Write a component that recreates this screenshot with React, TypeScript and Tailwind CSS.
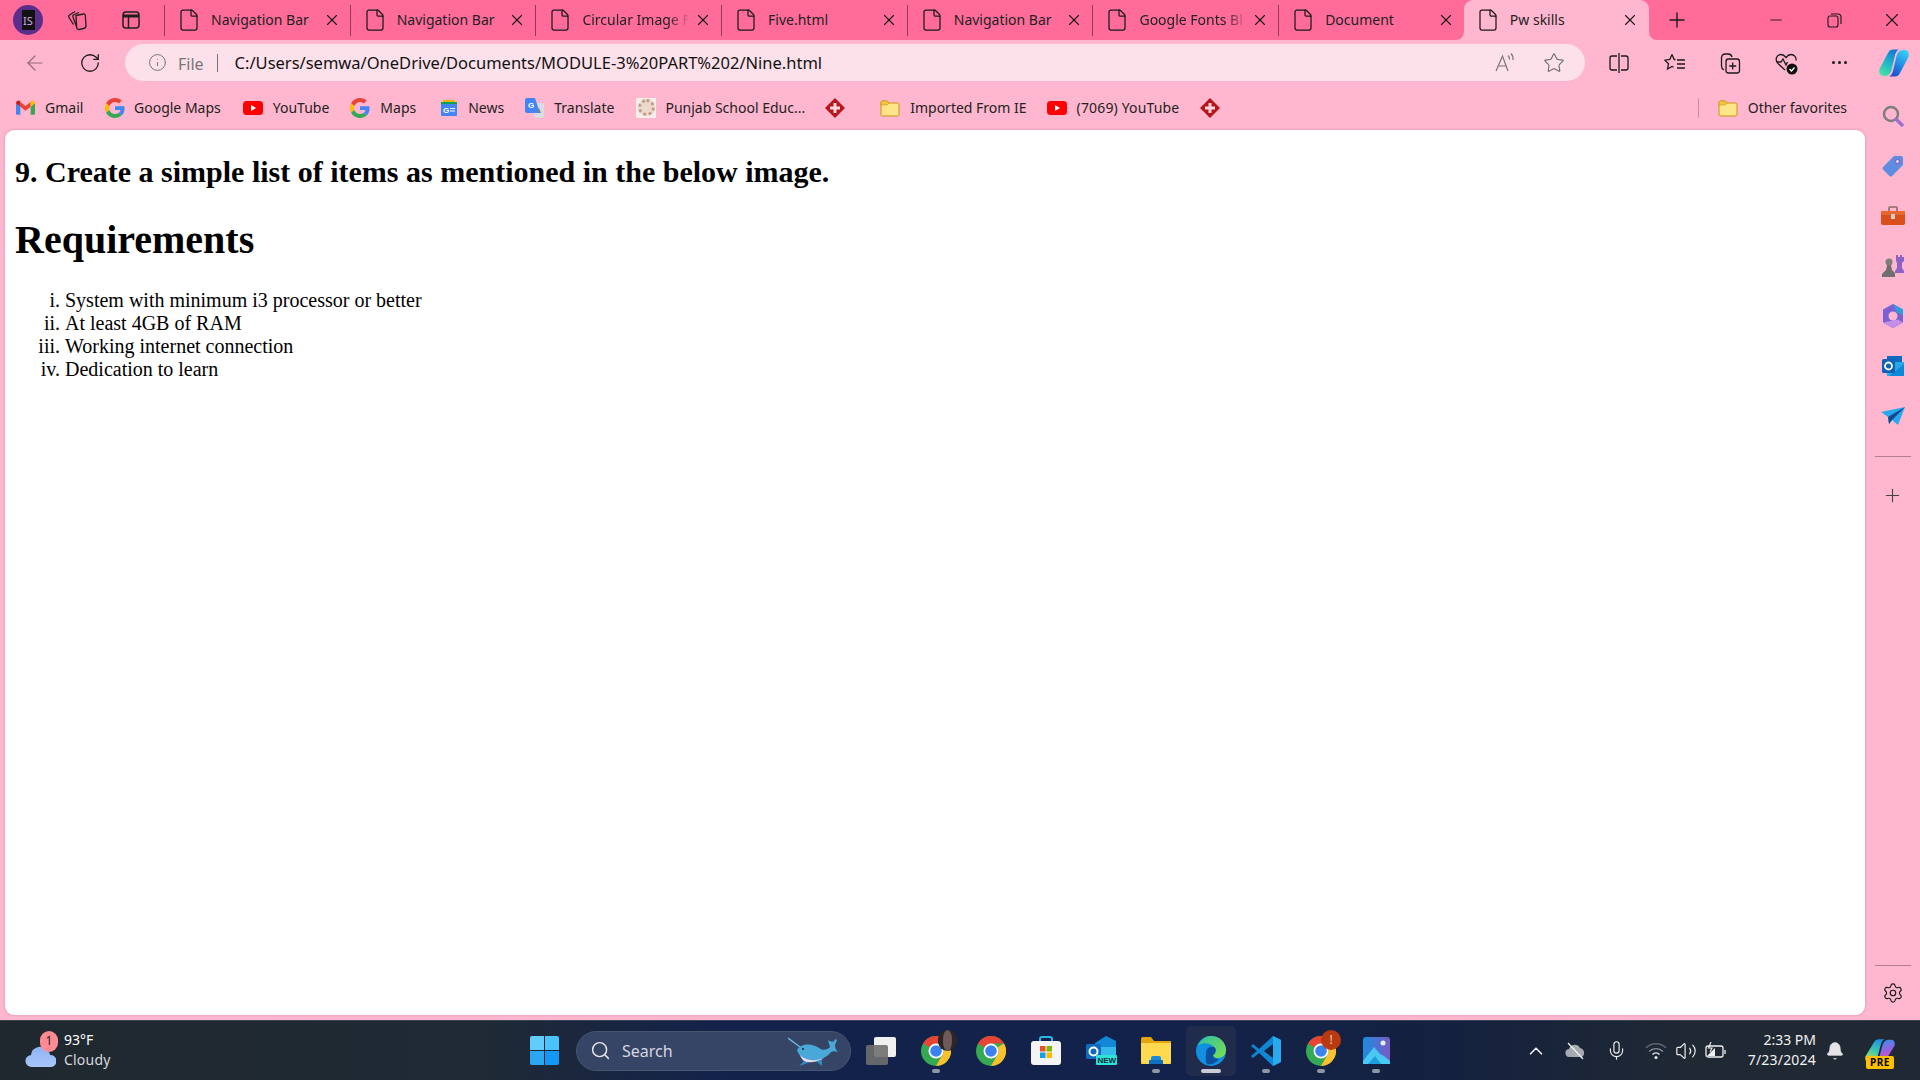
import React from "react";
import { ArrowLeft, RotateCw, Info, Star, X, Plus, Minus, Search, Settings, Mic, Volume2, ChevronUp, Bell, File } from "lucide-react";

const ui = "font-['Noto_Sans','Open_Sans',sans-serif]";

const GoogleG = ({ s = 20 }: { s?: number }) => (
  <svg width={s} height={s} viewBox="0 0 48 48">
    <path fill="#EA4335" d="M24 9.5c3.5 0 6.700 1.200 9.200 3.600l6.900-6.900C35.900 2.400 30.500 0 24 0 14.600 0 6.500 5.400 2.600 13.200l8 6.200C12.500 13.600 17.800 9.500 24 9.500z" />
    <path fill="#4285F4" d="M47 24.500c0-1.600-.2-3.100-.4-4.500H24v9h13c-.6 3-2.200 5.500-4.700 7.200l7.700 6C44.400 38.100 47 31.900 47 24.500z" />
    <path fill="#FBBC05" d="M10.600 28.600A14.500 14.500 0 0 1 10.600 19.400l-8-6.200a24 24 0 0 0 0 21.600l8-6.200z" />
    <path fill="#34A853" d="M24 48c6.500 0 11.900-2.100 15.900-5.800l-7.700-6c-2.100 1.400-4.900 2.300-8.200 2.300-6.200 0-11.500-4.200-13.400-9.900l-8 6.200C6.500 42.600 14.600 48 24 48z" />
  </svg>
);
const Gmail = () => (
  <svg width="19" height="15" viewBox="0 0 24 18">
    <path fill="#4285F4" d="M0 3v13.500A1.500 1.500 0 0 0 1.500 18H5.500V8z" />
    <path fill="#34A853" d="M24 3v13.500a1.500 1.500 0 0 1-1.500 1.500H18.500V8z" />
    <path fill="#EA4335" d="M5.500 8V2L12 7l6.500-5v6L12 13z" />
    <path fill="#C5221F" d="M0 3.500C0 .8 3.200-.7 5.500 1V8L0 3.500z" />
    <path fill="#FBBC04" d="M24 3.500C24 .8 20.800-.7 18.500 1V8L24 3.500z" />
  </svg>
);
const YT = () => (
  <svg width="20" height="14" viewBox="0 0 20 14"><rect width="20" height="14" rx="3.500" fill="#f00" /><path d="M8 4l5 3-5 3z" fill="#fff" /></svg>
);
const Diamond = () => (
  <svg width="20" height="20" viewBox="0 0 20 20">
    <path d="M10 0l10 10-10 10L0 10z" fill="#b8151b" />
    <path d="M8.500 5h3v3.500H15v3h-3.500V15h-3v-3.500H5v-3h3.500z" fill="#fbd5dc" />
  </svg>
);
const Folder = () => (
  <svg width="20" height="20" viewBox="0 0 20 20">
    <path d="M1 4.500A1.500 1.500 0 0 1 2.500 3H7l2 2h8.500A1.500 1.500 0 0 1 19 6.500v10a1.500 1.500 0 0 1-1.500 1.500h-15A1.500 1.500 0 0 1 1 16.500z" fill="#ffe58a" stroke="#c8950e" />
    <path d="M1 7V4.500A1.500 1.500 0 0 1 2.500 3H7l2 2-2 2z" fill="#f2c53d" stroke="#c8950e" strokeWidth=".6" />
  </svg>
);
const News = () => (
  <svg width="18" height="18" viewBox="0 0 18 18">
    <path d="M3 1h12v5H3z" fill="#f4b400" /><path d="M1 3h16v3H1z" fill="#0f9d58" />
    <rect x="1" y="5" width="16" height="12" rx="1" fill="#4285F4" />
    <text x="3" y="14" fontSize="8" fill="#fff" fontWeight="700" fontFamily="Liberation Sans">G</text>
    <path d="M10 9h5v1h-5zm0 2.500h5v1h-5z" fill="#fff" />
  </svg>
);
const Translate = () => (
  <svg width="19" height="20" viewBox="0 0 19 20">
    <path d="M7 5h10a2 2 0 0 1 2 2v11a2 2 0 0 1-2 2h-7z" fill="#d9dde3" />
    <path d="M2 0h8l5 15H2a2 2 0 0 1-2-2V2a2 2 0 0 1 2-2z" fill="#4285F4" />
    <text x="3" y="10" fontSize="8" fill="#fff" fontWeight="700" fontFamily="Liberation Sans">G</text>
    <path d="M14 10l2 5h-1l-.5-1.300h-2L12 15h-1z" fill="#7a8088" />
  </svg>
);
const Seal = () => (
  <div className="w-[20px] h-[20px] bg-[#f5efe9] flex items-center justify-center">
    <div className="w-[17px] h-[17px] rounded-full border-[3px] border-dotted border-[#c49a86] bg-[#ead9cc]" />
  </div>
);

const TabFile = () => <File size={24} strokeWidth={1.250} className="text-[#1a1a1a] shrink-0" />;

function Tab({ title, fade }: { title: string; fade?: boolean }) {
  return (
    <div className="w-[185.7px] h-[31px] flex items-center border-l border-[#8e3a58] pl-[12px] pr-[9px]">
      <TabFile />
      <span className={`ml-[10px] pb-[2px] w-[108px] overflow-hidden whitespace-nowrap text-[14px] text-[#222] ${fade ? "[mask-image:linear-gradient(to_right,black_80%,transparent)]" : ""}`}>{title}</span>
      <X size={18} strokeWidth={1.500} className="ml-auto text-[#1a1a1a]" />
    </div>
  );
}

const bookmarks: { icon: React.ReactNode; label: string; ml: number; gap: number }[] = [
  { icon: <GoogleG />, label: "Google Maps", ml: 21, gap: 9 },
  { icon: <YT />, label: "YouTube", ml: 22, gap: 10 },
  { icon: <GoogleG />, label: "Maps", ml: 21, gap: 10 },
  { icon: <News />, label: "News", ml: 24, gap: 10 },
  { icon: <Translate />, label: "Translate", ml: 21, gap: 10 },
  { icon: <Seal />, label: "Punjab School Educ...", ml: 22, gap: 9 },
];

const Copilot = ({ s = 30 }: { s?: number }) => (
  <svg width={s} height={s} viewBox="0 0 30 30">
    <defs>
      <linearGradient id="cp1" x1="0.2" y1="1" x2="0.7" y2="0"><stop offset="0" stopColor="#45e3a5" /><stop offset="0.5" stopColor="#1cb6c8" /><stop offset="1" stopColor="#0f78d8" /></linearGradient>
      <linearGradient id="cp2" x1="0.7" y1="0" x2="0.2" y2="1"><stop offset="0" stopColor="#35cdf6" /><stop offset="0.6" stopColor="#1f7fe0" /><stop offset="1" stopColor="#2148c8" /></linearGradient>
    </defs>
    <path d="M9 5C10 2.500 12 1.500 14 1.500H21C18 1.500 17 4 16 7L12.500 22C11.500 26 9 28 6 28H4C1 28-.5 25 .5 21Z" fill="url(#cp1)" />
    <path d="M21 25C20 27.500 18 28.500 16 28.500H9C12 28.500 13 26 14 23L17.500 8C18.500 4 21 2 24 2H26C29 2 30.500 5 29.500 9Z" fill="url(#cp2)" />
  </svg>
);

const Chrome = ({ s = 30 }: { s?: number }) => (
  <svg width={s} height={s} viewBox="0 0 30 30">
    <circle cx="15" cy="15" r="15" fill="#34a853" />
    <path d="M15 0a15 15 0 0 1 13 7.500H15A7.500 7.500 0 0 0 8.500 11.300L2 7.500A15 15 0 0 1 15 0z" fill="#ea4335" />
    <path d="M28 7.500A15 15 0 0 1 15 30l6.500-11.200A7.500 7.500 0 0 0 21.500 11.300z" fill="#fbc02d" />
    <circle cx="15" cy="15" r="7.500" fill="#fff" />
    <circle cx="15" cy="15" r="5.800" fill="#3b82f0" />
  </svg>
);

const Dot = ({ wide }: { wide?: boolean }) => (
  <span className={`absolute bottom-[3px] left-1/2 -translate-x-1/2 h-[4px] rounded-full ${wide ? "w-[20px] bg-[#c9ccd4]" : "w-[8px] bg-[#8f95a5]"}`} />
);

function Slot({ children, dot, active }: { children: React.ReactNode; dot?: boolean; active?: boolean }) {
  return (
    <div className="w-[55px] h-[50px] shrink-0 flex items-center justify-center">
      <div className={`relative w-[50px] h-[50px] flex items-center justify-center rounded-[5px] ${active ? "bg-[#212c4c]" : ""}`}>
        {children}
        {dot && <Dot wide={active} />}
      </div>
    </div>
  );
}

export default function App() {
  return (
    <div className={`w-[1920px] h-[1080px] overflow-hidden flex flex-col bg-[#ffb7cf] ${ui}`}>
      {/* tab strip */}
      <div className="h-[40px] shrink-0 bg-[#ff6c9a] flex items-center">
        <div className="w-[164px] shrink-0 flex items-center pl-[13px]">
          <div className="w-[30px] h-[30px] rounded-full bg-[#5b2e8c] flex items-center justify-center">
            <div className="w-[13px] h-[20px] bg-[#111] flex items-center justify-center text-[11px] leading-none text-[#d9a8ec]">IS</div>
          </div>
          <svg className="ml-[23px]" width="22" height="22" viewBox="0 0 22 22" fill="none" stroke="#1f1f1f" strokeWidth="1.300">
            <path d="M10 6.500l7.500-1.500a1.500 1.500 0 0 1 1.800 1.300l.7 10a3 3 0 0 1-2.500 3.200L13 20.500a2 2 0 0 1-2.300-1.800z" />
            <path d="M10.500 17.500 7 8a2 2 0 0 1 1.200-2.500L13 3.500" />
            <path d="M7.500 15.500 3 8.500a2 2 0 0 1 .8-2.700L9 2.500" />
          </svg>
          <svg className="ml-[33px]" width="20" height="20" viewBox="0 0 20 20" fill="none" stroke="#1f1f1f" strokeWidth="1.500">
            <rect x="2" y="2" width="16" height="16" rx="3" />
            <path d="M2 6h16" strokeWidth="3" /><path d="M7.500 6v12" />
          </svg>
        </div>
        <Tab title="Navigation Bar" />
        <Tab title="Navigation Bar" />
        <Tab title="Circular Image F" fade />
        <Tab title="Five.html" />
        <Tab title="Navigation Bar" />
        <Tab title="Google Fonts Bl" fade />
        <Tab title="Document" />
        <div className="relative w-[185px] h-[40px] bg-[#ffb7cf] rounded-t-[9px] flex items-center pl-[12px] pr-[10px]">
          <svg className="absolute -left-[8px] bottom-0" width="8" height="8" viewBox="0 0 8 8"><path d="M8 0v8H0a8 8 0 0 0 8-8z" fill="#ffb7cf" /></svg>
          <svg className="absolute -right-[8px] bottom-0" width="8" height="8" viewBox="0 0 8 8"><path d="M0 0v8h8a8 8 0 0 1-8-8z" fill="#ffb7cf" /></svg>
          <TabFile />
          <span className="ml-[10px] pb-[2px] text-[14px] text-[#222]">Pw skills</span>
          <X size={18} strokeWidth={1.500} className="ml-auto text-[#1a1a1a]" />
        </div>
        <Plus size={24} strokeWidth={1.400} className="ml-[16px] text-[#1a1a1a]" />
        <Minus size={18} strokeWidth={1.200} className="ml-[78px] text-[#1a1a1a]" />
        <svg className="ml-[41px]" width="16" height="16" viewBox="0 0 16 16" fill="none" stroke="#1a1a1a" strokeWidth="1.100">
          <rect x="2" y="4" width="10" height="11" rx="2" /><path d="M5 2h7a3 3 0 0 1 3 3v7" />
        </svg>
        <X size={22} strokeWidth={1.200} className="ml-[39px] text-[#1a1a1a]" />
      </div>

      {/* toolbar */}
      <div className="h-[45px] shrink-0 flex items-center">
        <ArrowLeft size={24} strokeWidth={1.200} className="ml-[23px] text-[#96687a]" />
        <RotateCw size={22} strokeWidth={1.400} className="ml-[32px] text-[#1a1a1a]" />
        <div className="ml-[24px] w-[1460px] h-[37px] rounded-full bg-[#fde1ea] flex items-center pl-[23px] pr-[20px]">
          <Info size={19} strokeWidth={1.200} className="text-[#6f6f6f]" />
          <span className="ml-[11px] mt-[2px] text-[16px] text-[#777]">File</span>
          <span className="ml-[13px] w-[1px] h-[18px] bg-[#777]" />
          <span className="ml-[17px] mt-[2px] text-[16.500px] text-[#111] whitespace-nowrap">C:/Users/semwa/OneDrive/Documents/MODULE-3%20PART%202/Nine.html</span>
          <svg className="ml-auto" width="22" height="22" viewBox="0 0 22 22" fill="none" stroke="#7c7378" strokeWidth="1.200">
            <path d="M2 19 8.500 4 14 19M4.500 14h7.500" /><path d="M14 3.500a5 5 0 0 1 1.500 4M17 1.500a8 8 0 0 1 2 6.500" />
          </svg>
          <Star size={22} strokeWidth={1.200} className="ml-[27px] text-[#6f6a6d]" />
        </div>
        <svg className="ml-[24px]" width="20" height="20" viewBox="0 0 20 20" fill="none" stroke="#1a1a1a" strokeWidth="1.300">
          <path d="M10 0v20M8 3H3a2 2 0 0 0-2 2v10a2 2 0 0 0 2 2h5M12 3h5a2 2 0 0 1 2 2v10a2 2 0 0 1-2 2h-5" />
        </svg>
        <svg className="ml-[35px]" width="22" height="22" viewBox="0 0 22 22" fill="none" stroke="#1a1a1a" strokeWidth="1.300">
          <path d="M8 2.500 5.800 7.500l-5 .7 3.700 3.500-1 5.300 4.500-2.600 1.500 .9" /><path d="M8 2.500l2.200 5h1.300" /><path d="M13 8h8M13 12h8M13 16h8" />
        </svg>
        <svg className="ml-[33px]" width="22" height="22" viewBox="0 0 22 22" fill="none" stroke="#1a1a1a" strokeWidth="1.300">
          <path d="M5 18c-2-1-2.500-2-2.500-4V6c0-2 1-4 4-4h3c2 0 3 1 3.500 3" />
          <rect x="7" y="7" width="13.500" height="14" rx="2.500" /><path d="M13.700 10.500v7M10.200 14h7" />
        </svg>
        <svg className="ml-[33px]" width="24" height="24" viewBox="0 0 24 24" fill="none" stroke="#1a1a1a" strokeWidth="1.300">
          <path d="M11 19 4 12.500C.5 9 2.500 3.500 7 3.500c2 0 3.500 1 5 3 1.500-2 3-3 5-3 3.500 0 5.500 3 5 6" />
          <path d="M3 11h4l2-3 3 6 1.500-3" />
          <circle cx="18" cy="18" r="5.500" fill="#111" stroke="none" /><path d="M15.500 18l2 2 3-3.500" stroke="#fff" />
        </svg>
        <span className="ml-[34px] flex gap-[3px]">
          <span className="w-[3px] h-[3px] rounded-full bg-[#1a1a1a]" /><span className="w-[3px] h-[3px] rounded-full bg-[#1a1a1a]" /><span className="w-[3px] h-[3px] rounded-full bg-[#1a1a1a]" />
        </span>
        <div className="ml-[32px]"><Copilot /></div>
      </div>

      <div className="flex-1 min-h-0 flex">
        {/* bookmarks + page */}
        <div className="w-[1865px] shrink-0 flex flex-col pb-[5px]">
          <div className="h-[45px] shrink-0 flex items-center text-[14px] text-[#222] whitespace-nowrap">
            <div className="ml-[16px]"><Gmail /></div>
            <span className="ml-[10px] w-[39px]">Gmail</span>
            {bookmarks.map((b, i) => (
              <div key={i} className="flex items-center" style={{ marginLeft: b.ml, gap: b.gap }}>
                {b.icon}
                <span>{b.label}</span>
              </div>
            ))}
            <div className="ml-[20px]"><Diamond /></div>
            <div className="ml-[35px]"><Folder /></div>
            <span className="ml-[10px]">Imported From IE</span>
            <div className="ml-[20px]"><YT /></div>
            <span className="ml-[10px] tracking-[0.15px]">(7069) YouTube</span>
            <div className="ml-[21px]"><Diamond /></div>
            <span className="ml-auto w-[1px] h-[20px] bg-[#c9909f]" />
            <div className="ml-[19px]"><Folder /></div>
            <span className="ml-[10px] mr-[18px]">Other favorites</span>
          </div>
          <div className="flex-1 min-h-0 ml-[5px] bg-white rounded-[9px] px-[10px] pt-[25px] text-black font-['Liberation_Serif',serif] shadow-[0_0_3px_rgba(150,80,110,0.4)]">
            <h2 className="text-[30px] leading-[34.5px] font-bold">9. Create a simple list of items as mentioned in the below image.</h2>
            <h1 className="mt-[27px] text-[40px] leading-[46px] font-bold">Requirements</h1>
            <ol className="mt-[26px] pl-[50px] list-[lower-roman] text-[20px] leading-[23px]">
              <li>System with minimum i3 processor or better</li>
              <li>At least 4GB of RAM</li>
              <li>Working internet connection</li>
              <li>Dedication to learn</li>
            </ol>
          </div>
        </div>

        {/* sidebar */}
        <div className="flex-1 flex flex-col items-center pt-[6px] pb-[16px]">
          {[
            <svg width="24" height="24" viewBox="0 0 24 24" fill="none"><circle cx="10" cy="10" r="7" stroke="#7d7d7d" strokeWidth="2.500" /><path d="M15.500 15.500 21 21" stroke="#9a6fd0" strokeWidth="3.500" strokeLinecap="round" /></svg>,
            <svg width="22" height="22" viewBox="0 0 22 22"><path d="M12 1h7a2 2 0 0 1 2 2v7L10 21a2 2 0 0 1-2.500 0L1 14.500A2 2 0 0 1 1 12z" fill="#5f8be0" /><circle cx="15.500" cy="6.500" r="2" fill="#e2d9f5" stroke="#7d55b5" /></svg>,
            <svg width="24" height="22" viewBox="0 0 24 22"><path d="M8 6V3a1 1 0 0 1 1-1h6a1 1 0 0 1 1 1v3" fill="none" stroke="#8c6a60" strokeWidth="1.600" /><rect y="6" width="24" height="14" rx="2" fill="#d94f1c" /><rect y="6" width="24" height="4" fill="#e8672e" /><rect x="10" y="9" width="4" height="5" fill="#cfcfcf" /></svg>,
            <svg width="24" height="24" viewBox="0 0 24 24"><path d="M15 1h2v2h2V1h2v2h2V1v6l-2 2v5l2 3v2H14v-2l2-3V9l-1-2z" fill="#8d64c6" /><circle cx="8" cy="8" r="3.500" fill="#7d7d7d" /><path d="M6 11h4l1 5 3 3v4H1v-3l4-4z" fill="#6f6f6f" /></svg>,
            <svg width="22" height="24" viewBox="0 0 22 24"><path d="M11 0l10 5.500v13L11 24 1 18.500v-13z" fill="#7b5fd3" /><path d="M11 0l10 5.500v6l-6-3z" fill="#2d9fe0" /><path d="M1 18.500 11 24l10-5.500-5-3z" fill="#c38ee6" /><circle cx="11" cy="12" r="4.500" fill="#ffb7cf" /></svg>,
            <svg width="22" height="22" viewBox="0 0 22 22"><rect x="5" y="1" width="15" height="8" fill="#0f6cbd" /><rect x="5" y="7" width="17" height="14" fill="#28a8ea" /><path d="M22 9v12H7z" fill="#0a8ad8" /><rect y="4" width="13" height="14" rx="1.500" fill="#0f62b5" /><circle cx="6.500" cy="11" r="3.500" fill="none" stroke="#fff" strokeWidth="1.800" /></svg>,
            <svg width="24" height="18" viewBox="0 0 24 18"><path d="M0 5 24 0 17 18l-6-5-3 4-1-7z" fill="#2aa8ee" /><path d="M7 10 24 0 11 13 8 17z" fill="#114a8c" /></svg>,
          ].map((icon, i) => (
            <div key={i} className="h-[50px] shrink-0 flex items-center justify-center">{icon}</div>
          ))}
          <div className="mt-[15px] w-[36px] h-[1px] bg-[#b0808f]" />
          <Plus size={21} strokeWidth={1.300} className="mt-[28px] text-[#444]" />
          <div className="mt-auto w-[36px] h-[1px] bg-[#b0808f]" />
          <Settings size={22} strokeWidth={1.300} className="mt-[16px] text-[#1a1a1a]" />
        </div>
      </div>

      {/* taskbar */}
      <div className="h-[60px] shrink-0 border-t border-[#3b4150] bg-[linear-gradient(to_right,#20282f_0%,#1f2a35_25%,#13224b_38%,#13224a_62%,#14213f_75%,#1f2833_88%,#1f2833_100%)] flex items-center text-white">
        <div className="w-[530px] shrink-0 flex items-center pl-[25px]">
          <div className="relative w-[39px] h-[40px] flex items-end">
            <svg width="31" height="24" viewBox="0 0 31 24" className="mb-[3px]">
              <defs><linearGradient id="cl" x1="0" y1="0" x2="0" y2="1"><stop offset="0" stopColor="#8fb4f5" /><stop offset="1" stopColor="#a9c6fb" /></linearGradient></defs>
              <path d="M7 23a6 6 0 0 1-1-12 8.500 8.500 0 0 1 15-5 6 6 0 0 1 4 5 6 6 0 0 1 1 12z" fill="url(#cl)" />
            </svg>
            <span className="absolute left-[15px] top-[0px] w-[18px] h-[21px] rounded-full bg-[#ff8a94] text-[#1a1a1a] text-[12px] flex items-center justify-center">1</span>
          </div>
          <div className="text-[14px] leading-[20px] pb-[2px]">
            <div>93°F</div>
            <div className="text-[#d6d8dc] tracking-[0.2px]">Cloudy</div>
          </div>
        </div>
        <div className="grid grid-cols-2 gap-[1.500px] w-[29px] h-[29px] shrink-0">
          <span className="bg-[#60cdfb] rounded-tl-[2px]" /><span className="bg-[#49c3fb] rounded-tr-[2px]" />
          <span className="bg-[#2ba7f0] rounded-bl-[2px]" /><span className="bg-[#1398f5] rounded-br-[2px]" />
        </div>
        <div className="ml-[17px] w-[275px] h-[40px] shrink-0 rounded-full bg-[#364465] border border-[#47536f] flex items-center pl-[13px] pr-[10px]">
          <Search size={21} strokeWidth={1.700} className="text-[#e8e8e8]" />
          <span className="ml-[11px] text-[16px] text-[#d4d8e0]">Search</span>
          <svg className="ml-auto" width="52" height="30" viewBox="0 0 52 30">
            <path d="M0 2 12 11" stroke="#6ab6e3" strokeWidth="1.500" />
            <path d="M9 14C13 7 24 7 31 12c4 3 8 2 11-1l-2-7c3 2 6 3 7-1l2 1-2 5c0 3 1 5 3 7-3-1-5-1-7 0-4 5-11 9-19 8C15 24 11 20 9 14z" fill="#4aa8d8" />
            <path d="M12 19c5 5 14 7 24 3-5 4-13 5-18 4-3-1-5-4-6-7z" fill="#e0dcf2" />
            <path d="M16 25 11 30l9-3zM28 25l6 5 0-6z" fill="#2a8fc0" />
            <circle cx="15" cy="13" r="1" fill="#123" />
          </svg>
        </div>
        <div className="ml-[2.500px] flex items-center">
          <Slot>
            <div className="relative w-[30px] h-[28px]">
              <span className="absolute right-0 top-0 w-[22px] h-[20px] rounded-[2px] bg-[#f0f0f0]" />
              <span className="absolute left-0 bottom-0 w-[22px] h-[20px] rounded-[2px] bg-[#6f6f6f]/90" />
            </div>
          </Slot>
          <Slot dot>
            <div className="relative"><Chrome />
              <span className="absolute -right-[6px] -top-[6px] w-[19px] h-[21px] rounded-full bg-[#6e5a58] border-x-[5px] border-[#2c2526]" />
            </div>
          </Slot>
          <Slot><Chrome /></Slot>
          <Slot>
            <svg width="30" height="30" viewBox="0 0 30 30">
              <path d="M9 6V3a2 2 0 0 1 2-2h8a2 2 0 0 1 2 2v3" fill="none" stroke="#29b6e8" strokeWidth="2" />
              <rect y="5" width="30" height="24" rx="3" fill="#f4f4f4" />
              <rect x="9" y="10" width="5.500" height="5.500" fill="#e8522a" /><rect x="15.500" y="10" width="5.500" height="5.500" fill="#7fb900" />
              <rect x="9" y="16.500" width="5.500" height="5.500" fill="#0ea2e8" /><rect x="15.500" y="16.500" width="5.500" height="5.500" fill="#ffb900" />
            </svg>
          </Slot>
          <Slot>
            <svg width="31" height="29" viewBox="0 0 31 29">
              <path d="M9 7 20 0l10 5v16H9z" fill="#1287d8" /><path d="M15 11h15v10H15z" fill="#35b8ea" />
              <rect y="8" width="15" height="15" rx="1.500" fill="#0f6cbd" />
              <circle cx="7.500" cy="15.500" r="4" fill="none" stroke="#fff" strokeWidth="2" />
              <rect x="10" y="19" width="21" height="10" rx="1" fill="#2ee2d8" />
              <text x="11.500" y="27" fontSize="8" fontWeight="700" fill="#0b2a3a" fontFamily="Liberation Sans">NEW</text>
            </svg>
          </Slot>
          <Slot dot>
            <svg width="30" height="27" viewBox="0 0 30 27">
              <path d="M0 2a2 2 0 0 1 2-2h8l3 4h17v23H0z" fill="#e5a50e" />
              <path d="M0 6h30v19a2 2 0 0 1-2 2H2a2 2 0 0 1-2-2z" fill="#ffd94f" />
              <path d="M10 21a2 2 0 0 1 2-2h6a2 2 0 0 1 2 2v6H10z" fill="#1a8ad6" /><rect x="8" y="23" width="14" height="4" fill="#0f6fc0" />
            </svg>
          </Slot>
          <Slot dot active>
            <svg width="30" height="30" viewBox="0 0 30 30">
              <defs>
                <linearGradient id="eg" x1="0" y1="0" x2="1" y2="1"><stop offset="0" stopColor="#2cc1a0" /><stop offset="1" stopColor="#7fe04e" /></linearGradient>
              </defs>
              <circle cx="15" cy="15" r="15" fill="#1190e0" />
              <path d="M2 10C5 3 10 0 15 0c8 0 15 6 15 14 0 5-4 8-8 8-3 0-5-1-5-3 3-1 4-6 0-9C11 6 5 7 2 10z" fill="url(#eg)" />
              <path d="M10 17c0-4 3-7 8-6 3 2 2 6-1 8 0 3 3 4 6 4-3 4-7 6-12 5-2-3-1-8-1-11z" fill="#0c4f9e" />
            </svg>
          </Slot>
          <Slot dot>
            <svg width="30" height="30" viewBox="0 0 30 30">
              <path d="M22 0 30 4v22l-8 4L8 17l-6 5-2-2 6-5-6-5 2-2 6 5z" fill="#0e86d4" />
              <path d="M22 0 30 4v22l-8 4z" fill="#29a9ee" /><path d="M22 8 13 15l9 7z" fill="#13233f" />
            </svg>
          </Slot>
          <Slot dot>
            <div className="relative"><Chrome />
              <span className="absolute -right-[5px] -top-[6px] w-[20px] h-[20px] rounded-full bg-[#b93a10] text-[#f5c9b8] text-[12px] flex items-center justify-center">!</span>
            </div>
          </Slot>
          <Slot dot>
            <svg width="27" height="27" viewBox="0 0 27 27">
              <defs><linearGradient id="ph" x1="0" y1="0" x2="1" y2="0"><stop offset="0" stopColor="#1b8be0" /><stop offset="1" stopColor="#7a5bc5" /></linearGradient></defs>
              <rect width="27" height="27" rx="3" fill="url(#ph)" />
              <circle cx="20" cy="6" r="2.500" fill="#e8eefc" />
              <path d="M0 24 11 10l6 7 4 2 6 5v3H0z" fill="#49c8f2" /><path d="M5 27l7-8 6 8z" fill="#1e9fdc" />
            </svg>
          </Slot>
        </div>

        <div className="ml-auto flex items-center pr-[14px]">
          <div className="w-[40px] flex justify-center"><ChevronUp size={22} strokeWidth={1.800} className="text-[#f0f0f0]" /></div>
          <div className="w-[40px] flex justify-center">
            <svg width="22" height="18" viewBox="0 0 22 18"><path d="M5 15a4 4 0 0 1-1-8 6 6 0 0 1 11-1 5 5 0 0 1 2 9z" fill="#a7aaaf" /><path d="M3 1l15 16" stroke="#f0f0f0" strokeWidth="1.200" /></svg>
          </div>
          <div className="w-[40px] flex justify-center"><Mic size={21} strokeWidth={1.300} className="text-[#f0f0f0]" /></div>
          <div className="ml-[5px] w-[30px] flex justify-center">
            <svg width="22" height="18" viewBox="0 0 22 18" fill="none" strokeWidth="1.400">
              <path d="M1 6a14 14 0 0 1 20 0" stroke="#5e656f" /><path d="M4 9.500a10 10 0 0 1 14 0" stroke="#8a8f97" /><path d="M7.500 12.500a5 5 0 0 1 7 0" stroke="#f0f0f0" /><circle cx="11" cy="15.500" r="1.500" fill="#f0f0f0" stroke="none" />
            </svg>
          </div>
          <div className="w-[30px] flex justify-center"><Volume2 size={22} strokeWidth={1.300} className="text-[#f0f0f0]" /></div>
          <div className="w-[30px] flex justify-center">
            <svg width="22" height="18" viewBox="0 0 22 18" fill="none" stroke="#f0f0f0" strokeWidth="1.300">
              <rect x="1" y="4" width="17" height="11" rx="2" /><path d="M20 8v4" /><path d="M2 14l8-8v8z" fill="#f0f0f0" stroke="none" /><path d="M6 0 3.500 6H7l-2 4" strokeWidth="1.100" />
            </svg>
          </div>
          <div className="w-[85px] text-right text-[14px] leading-[20px] text-[#f2f2f2] whitespace-nowrap pb-[1px]">
            <div>2:33 PM</div>
            <div className="tracking-[0.2px]">7/23/2024</div>
          </div>
          <div className="w-[38px] flex justify-center"><Bell size={20} fill="#e4e4e4" strokeWidth={1} className="text-[#e4e4e4]" /></div>
          <div className="relative w-[52px] flex justify-center">
            <svg width="30" height="26" viewBox="0 0 30 30" preserveAspectRatio="none">
              <defs>
                <linearGradient id="pc1" x1="0.2" y1="1" x2="0.7" y2="0"><stop offset="0" stopColor="#c8dc46" /><stop offset="0.5" stopColor="#3cc8b0" /><stop offset="1" stopColor="#1a8fe6" /></linearGradient>
                <linearGradient id="pc2" x1="0.4" y1="0" x2="0.6" y2="1"><stop offset="0" stopColor="#3a8fe8" /><stop offset="0.5" stopColor="#9a5fe0" /><stop offset="1" stopColor="#f04fa0" /></linearGradient>
              </defs>
              <path d="M9 5C10 2.500 12 1.500 14 1.500H21C18 1.500 17 4 16 7L12.500 22C11.500 26 9 28 6 28H4C1 28-.5 25 .5 21Z" fill="url(#pc1)" />
              <path d="M21 25C20 27.500 18 28.500 16 28.500H9C12 28.500 13 26 14 23L17.500 8C18.500 4 21 2 24 2H26C29 2 30.500 5 29.500 9Z" fill="url(#pc2)" />
            </svg>
            <span className="absolute left-[12px] -bottom-[5px] w-[28px] h-[13px] rounded-[2px] bg-[#ffc000] text-black text-[10px] leading-[13px] font-bold text-center tracking-[0.5px]">PRE</span>
          </div>
        </div>
      </div>
    </div>
  );
}
